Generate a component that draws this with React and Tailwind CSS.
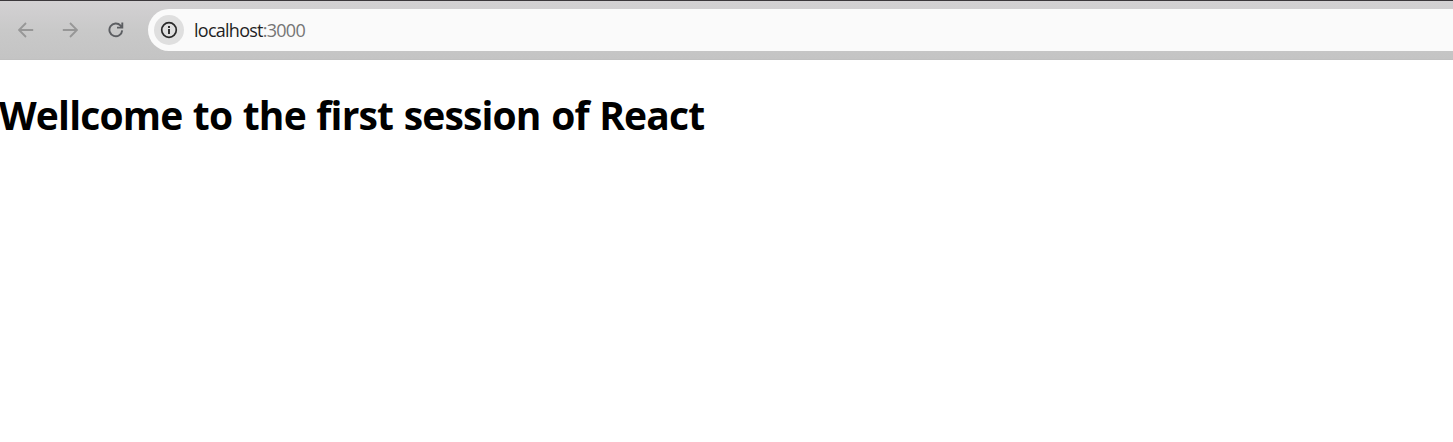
function ArrowIcon({ className = "" }) {
  return (
    <svg viewBox="0 0 16 16" className={`size-4 ${className}`} fill="none" stroke="#979797" strokeWidth="1.8">
      <path d="M15.2 8H1.6M8 1 1 8l7 7" />
    </svg>
  );
}

function ReloadIcon() {
  return (
    <svg viewBox="0 0 16 16" className="size-4" fill="none" stroke="#5c5e62" strokeWidth="1.9">
      <path d="M14.2 8.4A6.4 6.4 0 1 1 12.6 3.6L14 5" />
      <path d="M14.3.5v5.1H9" />
      <path d="M11.5 5.2h2.6V2.8z" fill="#5c5e62" stroke="none" />
    </svg>
  );
}

function InfoIcon() {
  return (
    <svg viewBox="0 0 18 18" className="size-[18px]" fill="none" stroke="#292929" strokeWidth="1.7">
      <circle cx="9" cy="9" r="7.3" />
      <path d="M9 8v5M9 5v1.9" strokeWidth="1.9" />
    </svg>
  );
}

function Toolbar() {
  return (
    <header className="flex h-[60px] items-start border-t border-t-[#3b373b] border-b border-b-[#c0c0c0] bg-linear-to-b from-[#d3d1d3] via-[#c9c9c9] to-[#c4c4c4] pt-2">
      <nav className="flex h-[41px] w-[148px] shrink-0 items-center gap-7 pl-[18px]">
        <button aria-label="Back"><ArrowIcon /></button>
        <button aria-label="Forward"><ArrowIcon className="rotate-180" /></button>
        <button aria-label="Reload" className="ml-[1.5px]"><ReloadIcon /></button>
      </nav>
      <div className="flex h-[42px] grow items-center rounded-l-full bg-[#fafafa] pl-1.5">
        <span className="flex size-[30px] items-center justify-center rounded-full bg-[#dfdfdf]">
          <InfoIcon />
        </span>
        <span className="ml-[10px] font-['Open_Sans',sans-serif] text-[18px] leading-6 tracking-[-0.74px] text-[#1f1f24]">
          localhost<span className="text-[#757575]">:3000</span>
        </span>
      </div>
    </header>
  );
}

export default function App() {
  return (
    <div className="h-screen overflow-hidden bg-white">
      <Toolbar />
      <main className="pt-[27px]">
        <h1 className="-ml-px whitespace-nowrap font-['Open_Sans',sans-serif] text-[39px] leading-[56px] font-bold tracking-[-0.84px] text-black [word-spacing:1.2px]">
          Wellcome to the first session of React
        </h1>
      </main>
    </div>
  );
}
